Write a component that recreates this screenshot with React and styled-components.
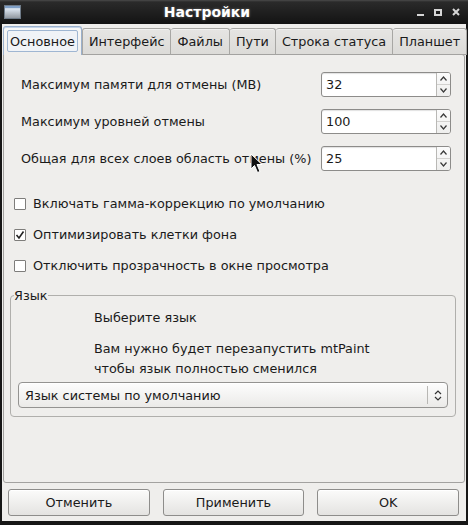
import React from 'react';
import styled, { createGlobalStyle } from 'styled-components';

const GlobalStyle = createGlobalStyle`
  html, body {
    margin: 0;
    padding: 0;
    background: #161616;
  }
  * {
    box-sizing: border-box;
  }
`;

const Window = styled.div`
  position: relative;
  width: 468px;
  height: 525px;
  display: flex;
  flex-direction: column;
  background: #161616;
  font-family: 'DejaVu Sans', 'Liberation Sans', sans-serif;
  font-size: 12.8px;
  color: #1a1a1a;
  overflow: hidden;
`;

const TitleBar = styled.div`
  height: 24px;
  flex: none;
  display: grid;
  grid-template-columns: 24px 1fr 60px;
  align-items: center;
  background: linear-gradient(#4a4a4a 0, #2a2a2a 2px, #131313 100%);
`;

const AppIcon = styled.svg`
  margin-left: 4px;
`;

const Title = styled.div`
  text-align: center;
  color: #ffffff;
  font-weight: bold;
  font-size: 14px;
  padding-right: 18px;
  text-shadow: 0 0 3px rgba(255, 255, 255, 0.35);
`;

const Controls = styled.div`
  display: flex;
  align-items: center;
  justify-content: flex-end;
  gap: 10px;
  padding-right: 8px;
`;

const Body = styled.div`
  flex: 1;
  margin: 0 2px 4px 2px;
  background: #efeeec;
  display: flex;
  flex-direction: column;
  padding: 2px 1px 0 1px;
`;

const TabStrip = styled.div`
  display: flex;
  align-items: flex-end;
  height: 29px;
  position: relative;
  z-index: 1;
`;

const Tab = styled.div`
  height: ${({ $active }) => ($active ? '29px' : '27px')};
  padding: ${({ $active }) => ($active ? '3px' : '0 6px')};
  display: flex;
  align-items: center;
  background: ${({ $active }) =>
    $active ? 'linear-gradient(#f8f8f7, #efeeec)' : 'linear-gradient(#e6e5e3, #dcdbd8)'};
  border: 1px solid ${({ $active }) => ($active ? '#9ab0cc' : '#a8a7a4')};
  border-bottom: ${({ $active }) => ($active ? 'none' : '1px solid #a3a2a0')};
  border-left: ${({ $first, $active }) => ($first || $active ? '' : 'none')};
  border-radius: 3px 3px 0 0;
  box-shadow: ${({ $active }) => ($active ? 'inset 0 1px 0 #c3d3e8' : 'inset 0 1px 0 #f2f2f1')};
  white-space: nowrap;
`;

const TabFocus = styled.span`
  display: flex;
  align-items: center;
  height: 100%;
  padding: 0 2px;
  border: 1px solid #9fb6d2;
  border-radius: 2px;
  background: #f0f3f7;
`;

const Panel = styled.div`
  flex: none;
  height: 429px;
  margin-top: -1px;
  border: 1px solid #a3a2a0;
  border-radius: 0 3px 3px 3px;
  background: #efeeec;
  display: flex;
  flex-direction: column;
  padding: 17px 8px 0 6px;
`;

const Form = styled.div`
  display: grid;
  grid-template-columns: 1fr 130px;
  row-gap: 12px;
  align-items: center;
  padding: 0 5px 0 11px;
`;

const Label = styled.div`
  white-space: nowrap;
`;

const Spin = styled.div`
  height: 25px;
  display: flex;
  background: #ffffff;
  border: 1px solid #8d8c8a;
  border-radius: 3px;
  box-shadow: inset 0 1px 1px rgba(0, 0, 0, 0.12);
  overflow: hidden;
`;

const SpinValue = styled.div`
  flex: 1;
  display: flex;
  align-items: center;
  padding-left: 4px;
`;

const SpinArrows = styled.div`
  width: 14px;
  display: flex;
  flex-direction: column;
  border-left: 1px solid #b9b8b5;
  background: linear-gradient(#fbfbfb, #eeeeed);
`;

const SpinArrow = styled.div`
  flex: 1;
  display: flex;
  align-items: center;
  justify-content: center;
  & + & {
    border-top: 1px solid #d2d1cf;
  }
`;

const Checks = styled.div`
  display: flex;
  flex-direction: column;
  gap: 18px;
  margin-top: 26px;
  padding-left: 4px;
`;

const CheckRow = styled.label`
  display: flex;
  align-items: center;
  gap: 7px;
  height: 13px;
`;

const Box = styled.span`
  width: 12px;
  height: 12px;
  flex: none;
  border: 1px solid #7e7d7b;
  border-radius: 1px;
  background: #ffffff;
  display: flex;
  align-items: center;
  justify-content: center;
`;

const Frame = styled.fieldset`
  margin: 17px 0 0 0;
  padding: 6px 7px 6px 7px;
  border: 1px solid #b0afac;
  border-radius: 4px;
  height: 128px;
`;

const Legend = styled.legend`
  padding: 0;
  margin-left: -4px;
  line-height: 13px;
`;

const Note = styled.div`
  padding-left: 76px;
  line-height: 20px;
  margin-bottom: ${({ $gap }) => $gap || 0}px;
`;

const Combo = styled.div`
  height: 26px;
  margin-top: 3px;
  display: flex;
  align-items: center;
  border: 1px solid #949391;
  border-radius: 4px;
  background: linear-gradient(#fdfdfd, #ebeae8);
  box-shadow: inset 0 1px 0 #ffffff;
`;

const ComboText = styled.div`
  flex: 1;
  padding-left: 6px;
`;

const ComboArrow = styled.div`
  width: 20px;
  height: 18px;
  display: flex;
  align-items: center;
  justify-content: center;
  border-left: 1px solid #b8b7b4;
`;

const ButtonRow = styled.div`
  display: flex;
  gap: 13px;
  padding: 6px 6px 0 5px;
`;

const Button = styled.button`
  flex: 1;
  height: 27px;
  font: inherit;
  color: #1a1a1a;
  border: 1px solid #8e8d8b;
  border-radius: 3px;
  background: linear-gradient(#fbfbfa, #e4e3e1);
  box-shadow: inset 0 1px 0 #ffffff;
  padding: 0;
`;

const Cursor = styled.svg`
  position: absolute;
  left: 250px;
  top: 153px;
`;

const Chevron = ({ up }) => (
  <svg width="7" height="5" viewBox="0 0 7 5">
    <path
      d={up ? 'M0.5 4.5 L3.5 1 L6.5 4.5' : 'M0.5 0.5 L3.5 4 L6.5 0.5'}
      fill="none"
      stroke="#3a3a3a"
      strokeWidth="1.2"
    />
  </svg>
);

const SpinButton = ({ value }) => (
  <Spin>
    <SpinValue>{value}</SpinValue>
    <SpinArrows>
      <SpinArrow>
        <Chevron up />
      </SpinArrow>
      <SpinArrow>
        <Chevron />
      </SpinArrow>
    </SpinArrows>
  </Spin>
);

const tabs = ['Основное', 'Интерфейс', 'Файлы', 'Пути', 'Строка статуса', 'Планшет'];

const fields = [
  ['Максимум памяти для отмены (MB)', '32'],
  ['Максимум уровней отмены', '100'],
  ['Общая для всех слоев область отмены (%)', '25'],
];

const checks = [
  ['Включать гамма-коррекцию по умолчанию', false],
  ['Оптимизировать клетки фона', true],
  ['Отключить прозрачность в окне просмотра', false],
];

const App = () => (
  <Window>
    <GlobalStyle />
    <TitleBar>
      <AppIcon width="17" height="14" viewBox="0 0 17 14">
        <defs>
          <linearGradient id="ico" x1="0" y1="0" x2="0" y2="1">
            <stop offset="0" stopColor="#9db7d6" />
            <stop offset="0.3" stopColor="#d9e2ec" />
            <stop offset="1" stopColor="#8f959c" />
          </linearGradient>
        </defs>
        <rect x="0.5" y="0.5" width="16" height="13" fill="url(#ico)" stroke="#6f7b88" />
        <rect x="1" y="1" width="15" height="2" fill="#7f9fc6" />
      </AppIcon>
      <Title>Настройки</Title>
      <Controls>
        <svg width="7" height="7" viewBox="0 0 7 7">
          <rect x="0" y="5" width="7" height="2" fill="#d6d6d6" />
        </svg>
        <svg width="8" height="7" viewBox="0 0 8 7">
          <rect x="1" y="1" width="6" height="5" fill="none" stroke="#d6d6d6" strokeWidth="2" />
        </svg>
        <svg width="8" height="8" viewBox="0 0 8 8">
          <path d="M1 1 L7 7 M7 1 L1 7" stroke="#d6d6d6" strokeWidth="2" />
        </svg>
      </Controls>
    </TitleBar>
    <Body>
      <TabStrip>
        {tabs.map((t, i) => (
          <Tab key={t} $active={i === 0} $first={i === 1}>
            {i === 0 ? <TabFocus>{t}</TabFocus> : t}
          </Tab>
        ))}
      </TabStrip>
      <Panel>
        <Form>
          {fields.map(([label, value]) => (
            <React.Fragment key={label}>
              <Label>{label}</Label>
              <SpinButton value={value} />
            </React.Fragment>
          ))}
        </Form>
        <Checks>
          {checks.map(([label, on]) => (
            <CheckRow key={label}>
              <Box>
                {on && (
                  <svg width="10" height="10" viewBox="0 0 10 10">
                    <path d="M1.5 5 L4 8 L8.5 1.5" fill="none" stroke="#222" strokeWidth="1.6" />
                  </svg>
                )}
              </Box>
              {label}
            </CheckRow>
          ))}
        </Checks>
        <Frame>
          <Legend>Язык</Legend>
          <Note $gap={11}>Выберите язык</Note>
          <Note>Вам нужно будет перезапустить mtPaint</Note>
          <Note>чтобы язык полностью сменился</Note>
          <Combo>
            <ComboText>Язык системы по умолчанию</ComboText>
            <ComboArrow>
              <svg width="8" height="11" viewBox="0 0 8 11">
                <path d="M1 4 L4 1 L7 4 M1 7 L4 10 L7 7" fill="none" stroke="#333" strokeWidth="1.2" />
              </svg>
            </ComboArrow>
          </Combo>
        </Frame>
      </Panel>
      <ButtonRow>
        <Button>Отменить</Button>
        <Button>Применить</Button>
        <Button>OK</Button>
      </ButtonRow>
    </Body>
    <Cursor width="13" height="21" viewBox="0 0 13 21">
      <path
        d="M1 1 L1 16 L4.5 12.5 L7.5 19.5 L10 18.5 L7 11.5 L12 11.5 Z"
        fill="#111"
        stroke="#fff"
        strokeWidth="1"
        strokeLinejoin="round"
      />
    </Cursor>
  </Window>
);

export default App;
